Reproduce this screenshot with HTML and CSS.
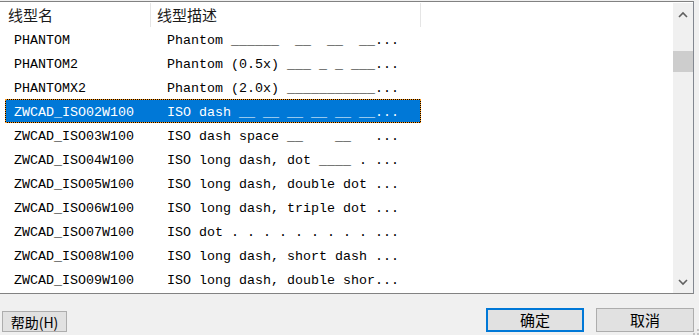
FILE: index.html
```html
<!DOCTYPE html>
<html lang="zh-CN">
<head>
    <meta charset="UTF-8">
    <title>线型</title>
    <link rel="stylesheet" href="styles.css">
</head>
<body>
    <div class="list">
        <div class="list-main">
            <div class="list-head">
                <div class="head-cell name-col">线型名</div>
                <div class="head-cell desc-col">线型描述</div>
                <div class="head-cell"></div>
            </div>
            <div class="row"><span class="name">PHANTOM</span><span class="desc">Phantom ______  __  __  __...</span></div>
            <div class="row"><span class="name">PHANTOM2</span><span class="desc">Phantom (0.5x) ___ _ _ ___...</span></div>
            <div class="row"><span class="name">PHANTOMX2</span><span class="desc">Phantom (2.0x) ___________...</span></div>
            <div class="row selected"><span class="name">ZWCAD_ISO02W100</span><span class="desc">ISO dash __ __ __ __ __ __...</span></div>
            <div class="row"><span class="name">ZWCAD_ISO03W100</span><span class="desc">ISO dash space __    __   ...</span></div>
            <div class="row"><span class="name">ZWCAD_ISO04W100</span><span class="desc">ISO long dash, dot ____ . ...</span></div>
            <div class="row"><span class="name">ZWCAD_ISO05W100</span><span class="desc">ISO long dash, double dot ...</span></div>
            <div class="row"><span class="name">ZWCAD_ISO06W100</span><span class="desc">ISO long dash, triple dot ...</span></div>
            <div class="row"><span class="name">ZWCAD_ISO07W100</span><span class="desc">ISO dot . . . . . . . . . ...</span></div>
            <div class="row"><span class="name">ZWCAD_ISO08W100</span><span class="desc">ISO long dash, short dash ...</span></div>
            <div class="row"><span class="name">ZWCAD_ISO09W100</span><span class="desc">ISO long dash, double shor...</span></div>
        </div>
        <div class="scrollbar">
            <div class="arrow">
                <svg width="10" height="7" viewBox="0 0 10 7"><polyline points="1,6 5,2 9,6" fill="none" stroke="#606060" stroke-width="1.6"/></svg>
            </div>
            <div class="track"><div class="thumb"></div></div>
            <div class="arrow">
                <svg width="10" height="7" viewBox="0 0 10 7"><polyline points="1,1 5,5 9,1" fill="none" stroke="#606060" stroke-width="1.6"/></svg>
            </div>
        </div>
    </div>

    <div class="buttons">
        <button class="btn help-btn">帮助(H)</button>
        <div class="spacer"></div>
        <button class="btn ok-btn">确定</button>
        <button class="btn">取消</button>
    </div>

    <svg class="grip" width="6" height="7" viewBox="0 0 6 7">
        <rect x="4" y="1" width="2" height="2" fill="#c4c4c4"/>
        <rect x="4" y="5" width="2" height="2" fill="#c4c4c4"/>
        <rect x="0" y="5" width="2" height="2" fill="#c4c4c4"/>
    </svg>
</body>
</html>
```

FILE: styles.css
```css
body {
    margin: 0;
    width: 699px;
    height: 335px;
    overflow: hidden;
    position: relative;
    background-color: #f0f0f0;
    font-family: "Noto Sans CJK SC", sans-serif;
}
.list {
    display: flex;
    width: 693px;
    height: 290px;
    margin-top: 1px;
    padding-top: 1px;
    background-color: white;
    border-top: 1px solid #828282;
    border-right: 1px solid #828790;
    border-bottom: 1px solid #828282;
}
.list-main {
    flex: 1;
}
.list-head {
    display: flex;
    height: 24px;
}
.head-cell {
    flex: 1;
    font-size: 15px;
    line-height: 23px;
    color: #1a1a1a;
}
.name-col {
    flex: none;
    width: 142px;
    padding-left: 8px;
    border-right: 1px solid #e5e5e5;
}
.desc-col {
    flex: none;
    width: 263px;
    padding-left: 6px;
    border-right: 1px solid #e5e5e5;
}
.row {
    display: grid;
    grid-template-columns: 161px 1fr;
    width: 414px;
    height: 22px;
    margin-left: 5px;
    border: 1px solid transparent;
    font-family: "Liberation Mono", monospace;
    font-size: 13.33px;
    line-height: 25px;
    color: #000;
    white-space: pre;
}
.row .name {
    padding-left: 8px;
}
.row.selected {
    color: white;
    border: 1px dotted #ff9a1a;
    background: linear-gradient(#0078d7, #0078d7) padding-box, #000 border-box;
}
.scrollbar {
    display: flex;
    flex-direction: column;
    width: 20px;
    background-color: #f0f0f0;
}
.arrow {
    height: 22px;
    display: flex;
    align-items: center;
    justify-content: center;
}
.track {
    flex: 1;
}
.thumb {
    margin-top: 26px;
    height: 21px;
    background-color: #cdcdcd;
}
.buttons {
    display: flex;
    align-items: flex-end;
    height: 38px;
    padding: 0 5px 3px 2px;
}
.spacer {
    flex: 1;
}
.btn {
    width: 98px;
    height: 24px;
    margin-left: 12px;
    padding: 0;
    background-color: #e1e1e1;
    border: 1px solid #adadad;
    font-family: "Noto Sans CJK SC", sans-serif;
    font-size: 15px;
    line-height: 20px;
    color: #000;
}
.help-btn {
    width: 65px;
    height: 21px;
    margin-left: 0;
    font-size: 14px;
    line-height: 18px;
}
.ok-btn {
    border: 2px solid #0078d7;
}
.grip {
    position: absolute;
    right: 0;
    bottom: 0;
}
```
